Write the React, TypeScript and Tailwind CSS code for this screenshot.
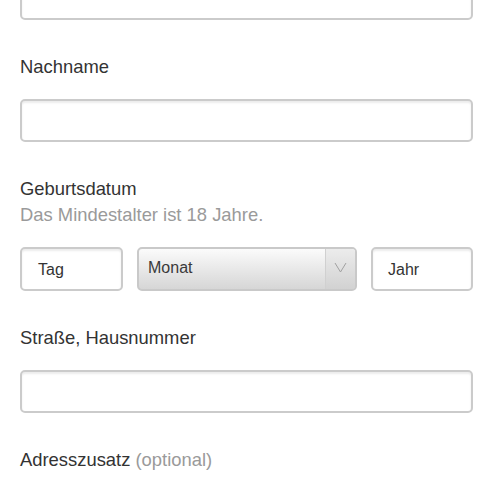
import React from 'react';

const inputBox =
  'h-[43px] w-full rounded-[5px] border-2 border-[#cbcbcb] bg-white shadow-[inset_0_2px_2px_rgba(0,0,0,0.08)]';

const Label: React.FC<{ children: React.ReactNode }> = ({ children }) => (
  <div className="h-[24px] text-[18.4px] leading-[24px] text-[#333]">{children}</div>
);

export default function App() {
  return (
    <div
      className="h-[480px] w-[480px] overflow-hidden bg-white pl-[20px] pr-[7px]"
      style={{ fontFamily: '"Liberation Sans", Arial, sans-serif' }}
    >
      {/* Vorname (Ende des Feldes) */}
      <div className={`${inputBox} -mt-[23px]`} />

      {/* Nachname */}
      <div className="mt-[35px]">
        <Label>Nachname</Label>
        <div className={`${inputBox} mt-[20px]`} />
      </div>

      {/* Geburtsdatum */}
      <div className="mt-[35px]">
        <Label>Geburtsdatum</Label>
        <div className="mt-[2px] h-[24px] text-[18.4px] leading-[24px] text-[#9a9a9a]">
          Das Mindestalter ist 18 Jahre.
        </div>
        <div className="mt-[20px] flex gap-[14px]">
          <div className="flex h-[44px] w-[103px] items-center rounded-[5px] border-2 border-[#cbcbcb] bg-white pl-[16px] pt-[2px] text-[16px] text-[#333] shadow-[inset_0_2px_2px_rgba(0,0,0,0.08)]">
            Tag
          </div>
          <div className="flex h-[44px] flex-1 overflow-hidden rounded-[5px] border-2 border-[#c9c9c9] bg-gradient-to-b from-[#fbfbfb] to-[#d6d6d6]">
            <div className="flex flex-1 items-center pb-[2px] pl-[9px] text-[16px] text-[#3a3a3a]">Monat</div>
            <div className="flex w-[30px] items-center justify-center border-l border-[#d0d0d0] bg-gradient-to-b from-[#ececec] to-[#d2d2d2]">
              <svg width="13" height="11" viewBox="0 0 13 11" fill="none" className="-mt-[4px]">
                <path d="M1 1 L6.5 10 L12 1" stroke="#a0a0a0" strokeWidth="1" />
              </svg>
            </div>
          </div>
          <div className="flex h-[44px] w-[102px] items-center rounded-[5px] border-2 border-[#cbcbcb] bg-white pl-[15px] pt-[2px] text-[16px] text-[#333] shadow-[inset_0_2px_2px_rgba(0,0,0,0.08)]">
            Jahr
          </div>
        </div>
      </div>

      {/* Straße */}
      <div className="mt-[35px]">
        <Label>Straße, Hausnummer</Label>
        <div className={`${inputBox} mt-[20px]`} />
      </div>

      {/* Adresszusatz */}
      <div className="mt-[35px]">
        <Label>
          Adresszusatz <span className="text-[#9a9a9a]">(optional)</span>
        </Label>
        <div className={`${inputBox} mt-[20px]`} />
      </div>
    </div>
  );
}
